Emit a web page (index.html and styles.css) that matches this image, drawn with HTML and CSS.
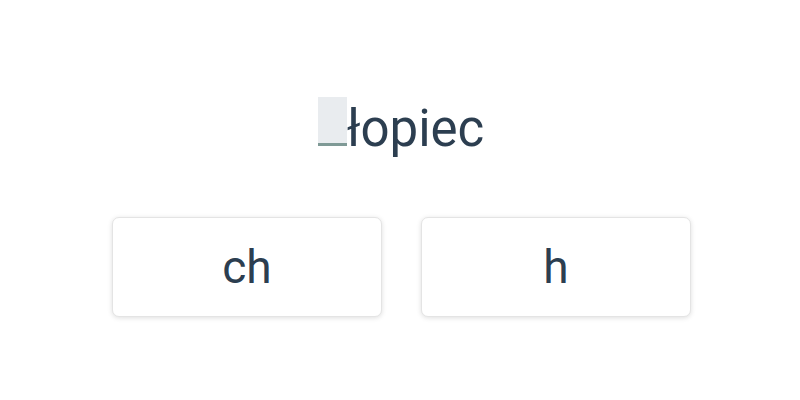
FILE: index.html
```html
<!DOCTYPE html>
<html lang="pl">
<head>
    <meta charset="UTF-8">
    <title>Ćwiczenie</title>
    <link rel="stylesheet" href="styles.css">
</head>
<body>
    <div id="app">
        <div class="word"><span class="gap"></span>łopiec</div>
        <div class="answers">
            <button class="answer">ch</button>
            <button class="answer">h</button>
        </div>
    </div>
</body>
</html>
```

FILE: styles.css
```css
*{
    margin: 0;
    padding: 0;
    box-sizing: border-box;
}
body{
    font-family: Roboto, "Liberation Sans", Arial, sans-serif;
    color: #2c3e50;
    background: #fff;
}
#app{
    width: 800px;
    height: 400px;
    display: flex;
    flex-direction: column;
    align-items: center;
    padding-top: 97px;
}
.word{
    font-size: 51px;
    line-height: 60px;
    white-space: nowrap;
    padding-left: 2px;
}
.gap{
    display: inline-block;
    width: 29px;
    height: 49px;
    background: #e9ecef;
    border-bottom: 3px solid #7f9a96;
}
.answers{
    display: flex;
    gap: 39px;
    margin-top: 58px;
    padding-left: 3px;
}
.answer{
    width: 270px;
    height: 100px;
    background: #fff;
    border: 1px solid #e4e4e4;
    border-radius: 7px;
    box-shadow: 0 1px 5px rgba(0,0,0,0.13);
    font-family: inherit;
    font-size: 46px;
    color: #2c3e50;
    cursor: pointer;
}
```
